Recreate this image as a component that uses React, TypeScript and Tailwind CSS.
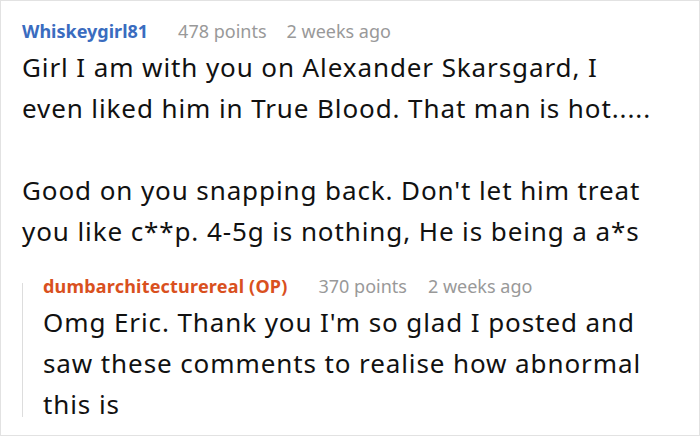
import React from 'react';

const font = { fontFamily: '"Noto Sans", "Open Sans", sans-serif' };

const App: React.FC = () => {
  return (
    <div
      className="w-[700px] h-[436px] overflow-hidden border border-[#e2e2e2] bg-white pl-[21px] pt-[18px]"
      style={font}
    >
      {/* Parent comment */}
      <div className="flex items-baseline text-[18px] leading-[24px]">
        <span className="font-bold text-[#3a6cbf]">Whiskeygirl81</span>
        <span className="ml-[30px] text-[#999999]">478 points</span>
        <span className="ml-[20px] text-[#999999]">2 weeks ago</span>
      </div>
      <div className="mt-[4px] text-[26px] leading-[41px] tracking-[0.9px] text-[#111111]">
        <p>
          Girl I am with you on Alexander Skarsgard, I<br />
          even liked him in True Blood. That man is hot.....
        </p>
        <p className="mt-[41px]">
          Good on you snapping back. Don't let him treat<br />
          you like c**p. 4-5g is nothing, He is being a a*s
        </p>
      </div>

      {/* Reply */}
      <div className="mt-[22px] flex">
        <div className="mt-[9px] mb-[8px] w-px shrink-0 bg-[#dddddd]" />
        <div className="pl-[20px]">
          <div className="flex items-baseline text-[18px] leading-[24px]">
            <span className="font-bold tracking-[0.2px] text-[#d9501e]">dumbarchitecturereal (OP)</span>
            <span className="ml-[31px] text-[#999999]">370 points</span>
            <span className="ml-[21px] text-[#999999]">2 weeks ago</span>
          </div>
          <p className="mt-[4px] text-[26px] leading-[41px] tracking-[0.9px] text-[#111111]">
            Omg Eric. Thank you I'm so glad I posted and<br />
            saw these comments to realise how abnormal<br />
            this is
          </p>
        </div>
      </div>
    </div>
  );
};

export default App;
